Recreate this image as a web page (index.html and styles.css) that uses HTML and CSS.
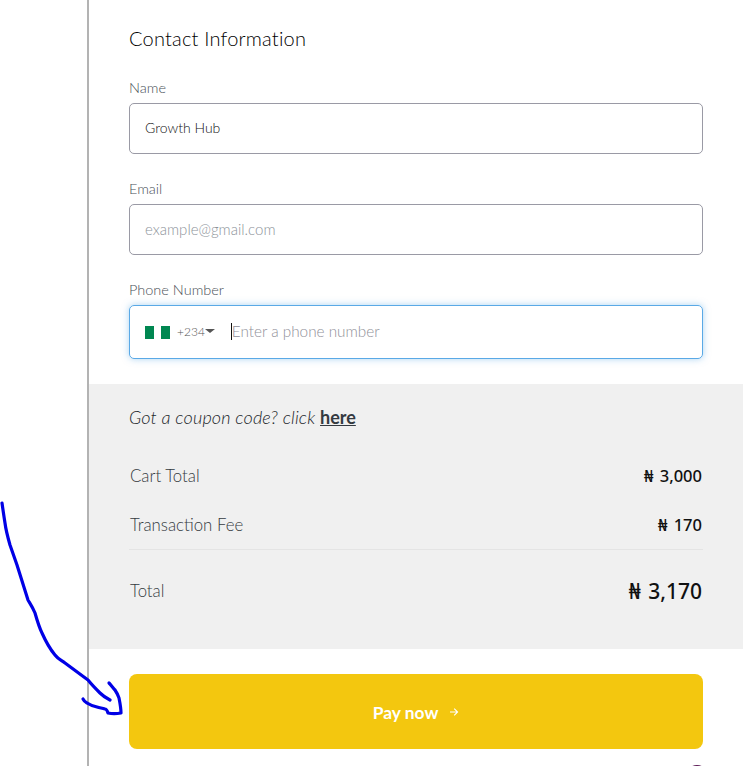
FILE: index.html
```html
<!DOCTYPE html>
<html lang="en">
<head>
<meta charset="utf-8">
<title>Checkout</title>
<link rel="stylesheet" href="styles.css">
</head>
<body>
<div class="page">
  <main class="checkout">
    <section class="contact">
      <h2 class="contact-title">Contact Information</h2>
      <div class="field">
        <label class="field-label">Name</label>
        <div class="input input-value">Growth Hub</div>
      </div>
      <div class="field">
        <label class="field-label">Email</label>
        <div class="input input-placeholder">example@gmail.com</div>
      </div>
      <div class="field">
        <label class="field-label">Phone Number</label>
        <div class="input phone">
          <svg class="flag" viewBox="0 0 25 13" aria-hidden="true"><rect width="25" height="13" fill="#fff"/><rect width="9" height="13" fill="#008751"/><rect x="16" width="9" height="13" fill="#008751"/></svg>
          <span class="dial">+234</span>
          <span class="caret"></span>
          <span class="cursor"></span>
          <span class="phone-placeholder">Enter a phone number</span>
        </div>
      </div>
    </section>
    <section class="summary">
      <p class="coupon">Got a coupon code? click <a class="coupon-link" href="#">here</a></p>
      <div class="row row-cart"><span class="row-label">Cart Total</span><span class="row-amount">₦ 3,000</span></div>
      <div class="row row-fee"><span class="row-label">Transaction Fee</span><span class="row-amount">₦ 170</span></div>
      <div class="row row-total"><span class="row-label">Total</span><span class="row-amount total-amount">₦ 3,170</span></div>
    </section>
    <section class="pay">
      <button class="pay-button" type="button"><span class="pay-label">Pay now</span>
        <svg class="pay-arrow" viewBox="0 0 10 10" aria-hidden="true"><path d="M1 5h7.5M5.2 1.6 8.6 5 5.2 8.4" fill="none" stroke="#fff" stroke-width="1.1"/></svg>
      </button>
      <div class="pay-footer"><span class="footer-badge"></span></div>
    </section>
  </main>
</div>
<svg class="annotation" viewBox="0 0 140 240" aria-hidden="true">
  <path class="stroke" d="M2 13C3 20 4 27 5 33C6 41 8 48 10 55L17 75L28 110C31 115 33 118 35 123C37 130 39 137 42 143C46 152 50 159 55 165C58 169 61 170 65 173L88 190C92 195 96 199 100 203C103 206 106 208 110 210"/>
  <path class="stroke" d="M109 193C111 195 113 198 115 200C117 203 118 205 119 208C120 213 121 218 121 223C116 224 112 224 108 223C107 220 106 219 105 219C102 218 100 218 97 217C93 216 90 215 87 213C85 212 84 211 83 209"/>
</svg>
</body>
</html>
```
FILE: styles.css
```css
html, body {
  margin: 0;
  height: 766px;
  overflow: hidden;
  background: #fff;
}
body {
  position: relative;
  font-family: Lato, "Open Sans", sans-serif;
  color: #212529;
}
.page {
  padding-left: 87px;
}
.checkout {
  border-left: 2px solid #b3b3b3;
  min-height: 766px;
}
.contact {
  padding: 26px 40px 25px;
}
.contact-title {
  margin: 0 0 29px;
  font-size: 20px;
  font-weight: 300;
  letter-spacing: 0.2px;
  line-height: 24px;
  color: #000;
}
.field {
  margin-bottom: 26px;
}
.field:last-child {
  margin-bottom: 0;
}
.field-label {
  display: block;
  font-size: 14.5px;
  font-weight: 300;
  line-height: 17px;
  color: #495057;
  margin-bottom: 7px;
}
.input {
  box-sizing: border-box;
  height: 51px;
  padding: 0 15px 2px;
  display: flex;
  align-items: center;
  border: 1px solid #9a9aa5;
  border-radius: 5px;
  font-size: 14px;
  font-weight: 300;
}
.input-value {
  color: #111;
}
.input-placeholder {
  color: #8d939a;
  font-size: 15px;
}
.phone {
  height: 54px;
  border-color: #5aa9e6;
  box-shadow: 0 0 7px rgba(90, 169, 230, 0.5);
}
.flag {
  width: 25px;
  height: 13px;
  flex: none;
  margin-top: 2px;
}
.dial {
  margin-left: 7px;
  font-size: 12px;
  color: #555;
}
.caret {
  width: 0;
  height: 0;
  border-left: 5px solid transparent;
  border-right: 5px solid transparent;
  border-top: 4px solid #555;
}
.cursor {
  width: 1px;
  height: 17px;
  margin-left: 16px;
  background: #111;
}
.phone-placeholder {
  font-size: 15.3px;
  color: #8f8f98;
}
.summary {
  background: #f0f0f0;
  padding: 21px 40px 33px;
  height: 265px;
  box-sizing: border-box;
}
.coupon {
  margin: 0 0 22px;
  font-size: 18px;
  font-style: italic;
  font-weight: 300;
  letter-spacing: 0.15px;
  line-height: 24px;
  color: #212529;
}
.coupon-link {
  font-style: normal;
  font-weight: 700;
  letter-spacing: 0;
  color: #343a40;
}
.row {
  display: flex;
  justify-content: space-between;
  align-items: center;
}
.row-cart, .row-fee {
  height: 49px;
}
.row-fee {
  border-bottom: 1px solid #e4e4e4;
}
.row-total {
  height: 82px;
}
.row-label {
  font-size: 16.8px;
  font-weight: 300;
  color: #343a40;
  padding-left: 1px;
}
.row-amount {
  font-family: "Noto Sans", "Open Sans", sans-serif;
  font-size: 16.5px;
  font-weight: 500;
  word-spacing: 2px;
  color: #111;
  padding-right: 1px;
}
.row-total .row-label {
  margin-top: -1px;
}
.total-amount {
  font-size: 21px;
}
.pay {
  padding: 25px 40px 0;
}
.pay-button {
  display: block;
  width: 100%;
  height: 75px;
  padding: 2px 0 0;
  border: 0;
  border-radius: 8px;
  background: #f3c70f;
  color: #fff;
  font-family: inherit;
  font-size: 17.4px;
  font-weight: 700;
}
.pay-arrow {
  width: 10px;
  height: 10px;
  margin-left: 7px;
  vertical-align: 2px;
}
.pay-footer {
  display: flex;
  justify-content: flex-end;
  margin-top: 16px;
}
.footer-badge {
  width: 22px;
  height: 22px;
  border-radius: 50%;
  background: #5b1a55;
  margin-right: -5px;
}
.annotation {
  position: absolute;
  left: 0;
  top: 490px;
  width: 140px;
  height: 240px;
}
.stroke {
  fill: none;
  stroke: #0000e6;
  stroke-width: 3.2;
  stroke-linecap: round;
  stroke-linejoin: round;
}
```
